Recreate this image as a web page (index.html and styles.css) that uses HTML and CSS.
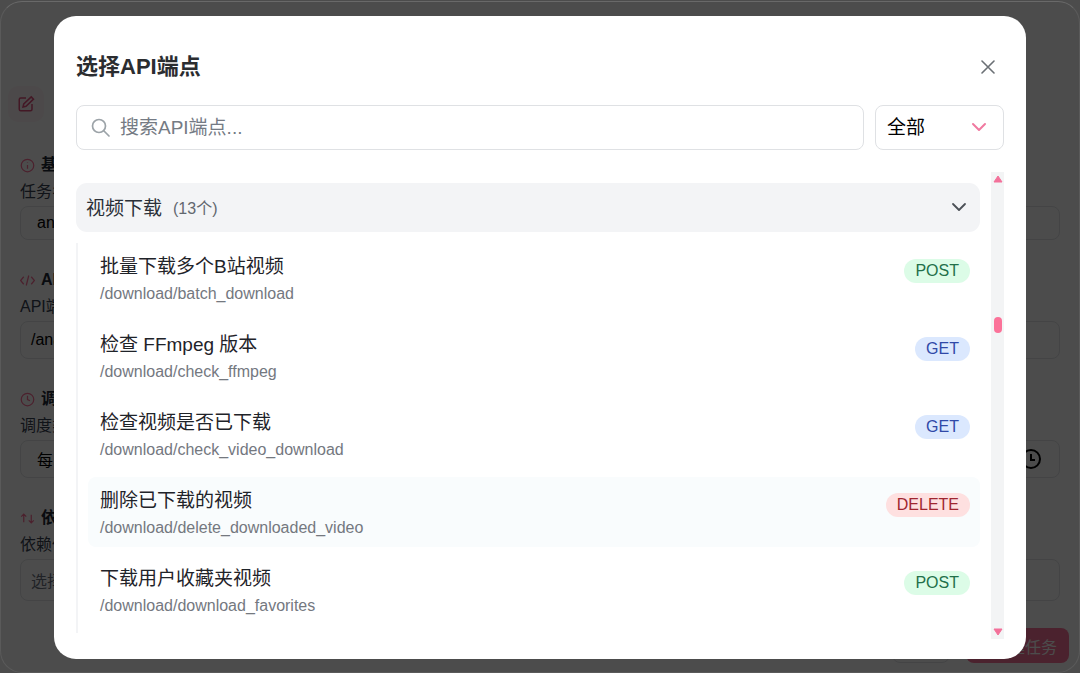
FILE: index.html
```html
<!DOCTYPE html>
<html lang="zh-CN">
<head>
<meta charset="utf-8">
<meta name="viewport" content="width=device-width, initial-scale=1">
<title>选择API端点</title>
<link rel="stylesheet" href="styles.css">
</head>
<body>
<main class="page">
  <header class="page-head">
    <span class="page-icon">
      <svg width="18" height="18" viewBox="0 0 24 24" fill="none" stroke="currentColor" stroke-width="2"><path d="M12 4H5a2 2 0 0 0-2 2v13a2 2 0 0 0 2 2h13a2 2 0 0 0 2-2v-7"/><path d="M19 2.500l3 3L12 15l-4 1 1-4z"/></svg>
    </span>
    <div>
      <h1 class="page-title">创建任务</h1>
      <p class="page-sub">添加任务</p>
    </div>
  </header>
  <section class="field">
    <h2 class="field-title"><svg class="field-icon" viewBox="0 0 24 24"><circle cx="12" cy="12" r="10"/><path d="M12 11v6M12 7v1"/></svg>基本信息</h2>
    <label class="field-label" for="name">任务名称</label>
    <input class="field-input" id="name" value="analysis">
  </section>
  <section class="field">
    <h2 class="field-title"><svg class="field-icon" viewBox="0 0 24 24"><path d="M6 6l-5 6 5 6M18 6l5 6-5 6M14 4l-4 16"/></svg>API 配置</h2>
    <label class="field-label" for="endpoint">API端点</label>
    <button class="field-input field-tall field-pick" id="endpoint" type="button">/analysis</button>
  </section>
  <section class="field">
    <h2 class="field-title"><svg class="field-icon" viewBox="0 0 24 24"><circle cx="12" cy="12" r="10"/><path d="M12 6v6l4 2"/></svg>调度设置</h2>
    <label class="field-label" for="schedule">调度类型</label>
    <div class="field-input field-tall field-time">
      <input class="field-inner" id="schedule" value="每日">
      <svg width="20" height="20" viewBox="0 0 20 20" fill="none" stroke="currentColor" stroke-width="2"><circle cx="10" cy="10" r="9"/><path d="M10 5v6h4"/></svg>
    </div>
  </section>
  <section class="field">
    <h2 class="field-title"><svg class="field-icon" viewBox="0 0 24 24"><path d="M6 18V5M2 9l4-4 4 4M18 6v13M14 15l4 4 4-4"/></svg>依赖关系</h2>
    <label class="field-label" for="depends">依赖任务</label>
    <button class="field-input field-select field-pick" id="depends" type="button">选择任务</button>
  </section>
  <footer class="page-foot">
    <button class="btn" type="button">取消</button>
    <button class="btn btn-primary" type="button">创建任务</button>
  </footer>
</main>

<div class="overlay">
  <div class="dialog" role="dialog" aria-modal="true" aria-labelledby="dialog-title">
    <header class="dialog-head">
      <h2 class="dialog-title" id="dialog-title">选择API端点</h2>
      <button class="close" type="button" aria-label="关闭">
        <svg width="14" height="14" viewBox="0 0 14 14" fill="none" stroke="currentColor" stroke-width="1.600" stroke-linecap="round"><path d="M1 1l12 12M13 1L1 13"/></svg>
      </button>
    </header>
    <div class="filters">
      <label class="search">
        <svg width="20" height="20" viewBox="0 0 20 20" fill="none" stroke="currentColor" stroke-width="1.700" stroke-linecap="round"><circle cx="8" cy="8" r="6.500"/><path d="M13 13l5 5"/></svg>
        <input class="search-input" type="text" placeholder="搜索API端点..." aria-label="搜索API端点">
      </label>
      <div class="method">
        <select class="method-select" aria-label="请求方法">
          <option>全部</option>
          <option>GET</option>
          <option>POST</option>
          <option>DELETE</option>
        </select>
        <svg class="method-arrow" width="16" height="10" viewBox="0 0 16 10" fill="none" stroke="currentColor" stroke-width="2" stroke-linecap="round" stroke-linejoin="round"><path d="M2 2l6 6 6-6"/></svg>
      </div>
    </div>
    <div class="results">
      <div class="list">
        <button class="group" type="button" aria-expanded="true">
          <span>视频下载</span><span class="count">(13个)</span>
          <svg class="group-arrow" width="16" height="10" viewBox="0 0 16 10" fill="none" stroke="currentColor" stroke-width="1.800" stroke-linecap="round" stroke-linejoin="round"><path d="M2 2l6 6 6-6"/></svg>
        </button>
        <div class="items">
          <button class="item" type="button"><span class="info"><span class="name">批量下载多个B站视频</span><span class="path">/download/batch_download</span></span><span class="badge post">POST</span></button>
          <button class="item" type="button"><span class="info"><span class="name">检查 FFmpeg 版本</span><span class="path">/download/check_ffmpeg</span></span><span class="badge get">GET</span></button>
          <button class="item" type="button"><span class="info"><span class="name">检查视频是否已下载</span><span class="path">/download/check_video_download</span></span><span class="badge get">GET</span></button>
          <button class="item active" type="button"><span class="info"><span class="name">删除已下载的视频</span><span class="path">/download/delete_downloaded_video</span></span><span class="badge delete">DELETE</span></button>
          <button class="item" type="button"><span class="info"><span class="name">下载用户收藏夹视频</span><span class="path">/download/download_favorites</span></span><span class="badge post">POST</span></button>
        </div>
      </div>
      <div class="scrollbar" aria-hidden="true">
        <svg width="10" height="8" viewBox="0 0 10 8"><path d="M5 1l4 6H1z" stroke-width="1" stroke-linejoin="round"/></svg>
        <span class="rail-before"></span>
        <span class="thumb"></span>
        <span class="rail-after"></span>
        <svg width="10" height="8" viewBox="0 0 10 8"><path d="M5 7l4-6H1z" stroke-width="1" stroke-linejoin="round"/></svg>
      </div>
    </div>
  </div>
</div>
</body>
</html>
```

FILE: styles.css
```css
* {
  box-sizing: border-box;
}

body {
  margin: 0;
  height: 100vh;
  overflow: hidden;
  background: #fff;
  color: #1f2937;
  font-family: "Liberation Sans", "Noto Sans CJK SC", sans-serif;
  font-size: 16px;
}

button,
input,
select {
  margin: 0;
  padding: 0;
  border: 0;
  background: none;
  color: inherit;
  font: inherit;
}

h1,
h2,
p {
  margin: 0;
}

svg {
  flex: none;
}

/* Task form behind the dialog */
.page {
  padding: 84px 20px 0;
}

.page-head {
  display: flex;
  align-items: center;
  gap: 16px;
  height: 40px;
  margin: 0 0 28px -12px;
}

.page-icon {
  display: grid;
  place-items: center;
  width: 36px;
  height: 36px;
  border-radius: 10px;
  background: #fff5f7;
  color: #e0507e;
}

.page-title {
  font-size: 18px;
  line-height: 22px;
}

.page-sub {
  font-size: 14px;
  line-height: 20px;
}

.field {
  margin-bottom: 27px;
}

.field-title {
  display: flex;
  align-items: center;
  gap: 6px;
  font-size: 16px;
  line-height: 26px;
}

.field-icon {
  width: 15px;
  height: 15px;
  fill: none;
  stroke: #fb6f98;
  stroke-width: 2;
}

.field-label {
  display: block;
  color: #374151;
  line-height: 28px;
}

.field-input {
  display: block;
  width: 100%;
  height: 34px;
  padding: 0 16px;
  border: 1px solid #e3e5e8;
  border-radius: 8px;
  color: #000;
}

.field-tall {
  height: 38px;
}

.field-pick {
  padding: 0 10px;
  text-align: left;
}

.field-select {
  height: 42px;
  color: #6b7280;
}

.field-time {
  display: flex;
  align-items: center;
  padding-right: 18px;
}

.field-inner {
  flex: 1;
}

.page-foot {
  display: flex;
  justify-content: flex-end;
  gap: 16px;
  margin-right: -9px;
}

.btn {
  height: 35px;
  padding: 0 12px;
  border: 1px solid #e3e5e8;
  border-radius: 8px;
}

.btn-primary {
  padding: 0 12px 0 27px;
  border: 0;
  background: #fb7299;
  color: #fff;
}

/* Dialog */
.overlay {
  position: fixed;
  inset: 0;
  display: flex;
  padding: 16px 5% 14px;
  background: rgba(0, 0, 0, 0.7);
}

.overlay::before {
  content: "";
  position: absolute;
  inset: 1px 0 0;
  border: 1px solid rgba(255, 255, 255, 0.08);
  border-top-color: rgba(255, 255, 255, 0.16);
  border-radius: 22px;
  pointer-events: none;
}

.dialog {
  display: flex;
  flex: 1;
  flex-direction: column;
  gap: 22px;
  min-width: 0;
  padding: 35px 22px 20px;
  border-radius: 22px;
  background: #fff;
}

.dialog-head {
  display: flex;
  align-items: center;
  justify-content: space-between;
}

.dialog-title {
  color: #2b2d30;
  font-size: 22px;
  line-height: 32px;
}

.close {
  display: grid;
  place-items: center;
  width: 32px;
  height: 32px;
  color: #6b7075;
}

.filters {
  display: flex;
  gap: 11px;
  font-size: 19px;
}

.search,
.method {
  height: 45px;
  border: 1px solid #dfe1e4;
  border-radius: 8px;
}

.search {
  display: flex;
  flex: 1;
  align-items: center;
  gap: 9px;
  padding: 0 14px;
  color: #9ca3a8;
}

.search-input {
  flex: 1;
  min-width: 0;
  color: #1f2937;
  outline: 0;
}

.search-input::placeholder {
  color: #757b84;
  opacity: 1;
}

.method {
  position: relative;
  width: 129px;
}

.method-select {
  width: 100%;
  height: 100%;
  padding-left: 11px;
  color: #000;
  appearance: none;
}

.method-arrow {
  position: absolute;
  top: 16px;
  right: 16px;
  color: #f07aa0;
  pointer-events: none;
}

.results {
  display: flex;
  flex: 1;
  gap: 11px;
  min-height: 0;
}

.list {
  flex: 1;
  min-width: 0;
  padding-top: 11px;
  overflow: hidden;
}

.group {
  display: flex;
  align-items: center;
  gap: 11px;
  width: 100%;
  height: 49px;
  padding: 0 13px 2px 10px;
  border-radius: 11px;
  background: #f3f4f6;
  color: #2b3038;
  font-size: 19px;
}

.count {
  color: #62676f;
  font-size: 16px;
}

.group-arrow {
  margin-left: auto;
  color: #4b5056;
}

.items {
  display: flex;
  flex-direction: column;
  gap: 8px;
  margin-top: 11px;
  padding: 0 0 8px 10px;
  border-left: 2px solid #f3f4f6;
}

.item {
  display: flex;
  align-items: flex-start;
  justify-content: space-between;
  padding: 11px 10px 5px 12px;
  border-radius: 8px;
  text-align: left;
}

.active {
  background: #f9fcfd;
}

.info {
  display: grid;
}

.name {
  color: #1f2329;
  font-size: 19px;
  line-height: 26px;
}

.path {
  color: #74787f;
  font-size: 16px;
  line-height: 28px;
}

.badge {
  margin-top: 5px;
  padding: 0 11px;
  border-radius: 12px;
  font-size: 16px;
  line-height: 24px;
}

.post {
  background: #dcfce7;
  color: #23704a;
}

.get {
  background: #dbe8fe;
  color: #3049a8;
}

.delete {
  background: #fee0e0;
  color: #a02630;
}

.scrollbar {
  display: flex;
  flex-direction: column;
  align-items: center;
  width: 13px;
  padding: 3px 0;
  background: #f3f4f5;
  fill: #f3719a;
  stroke: #f3719a;
}

.thumb {
  width: 8px;
  height: 16px;
  border-radius: 4px;
  background: #fb7299;
}

.rail-before {
  flex: 134;
}

.rail-after {
  flex: 295;
}
```
